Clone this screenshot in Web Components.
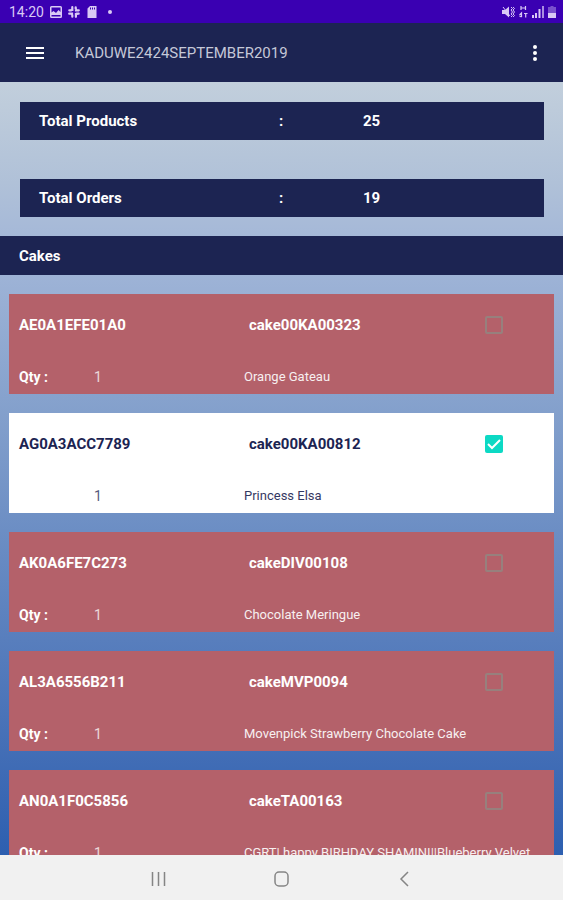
<!DOCTYPE html>
<html lang="en">
<head>
<meta charset="utf-8">
<meta name="viewport" content="width=device-width, initial-scale=1">
<title>Orders</title>
<style>
  html, body {
    height: 100%;
    margin: 0;
  }

  body {
    font-family: Roboto, "Liberation Sans", sans-serif;
    font-size: 14px;
    line-height: 20px;
    --navy: #1c2452;
    --card: #b4616a;
    --accent: #0cd9c4;
  }
</style>
</head>
<body>
<orders-app></orders-app>

<script>
// Attach an open shadow root and fill it with the given markup
const render = (el, html) => {
  const template = document.createElement("template");
  template.innerHTML = html;
  el.attachShadow({ mode: "open" }).appendChild(template.content.cloneNode(true));
}

const CAKES = [
  { id: "AE0A1EFE01A0", code: "cake00KA00323", qty: 1, name: "Orange Gateau" },
  { id: "AG0A3ACC7789", code: "cake00KA00812", qty: 1, name: "Princess Elsa", done: true },
  { id: "AK0A6FE7C273", code: "cakeDIV00108", qty: 1, name: "Chocolate Meringue" },
  { id: "AL3A6556B211", code: "cakeMVP0094", qty: 1, name: "Movenpick Strawberry Chocolate Cake" },
  { id: "AN0A1F0C5856", code: "cakeTA00163", qty: 1, name: "CGRT| happy BIRHDAY SHAMINI||Blueberry Velvet" },
]

class StatusBar extends HTMLElement {
  constructor() {
    super();
    render(this, /*html*/`
      <style>
        :host {
          display: flex;
          align-items: center;
          justify-content: space-between;
          height: 23px;
          padding: 0 7px 0 9px;
          background: #3a00b2;
          color: #d9c9f5;
        }

        .group {
          display: flex;
          align-items: center;
          gap: 6px;
        }

        .signals {
          gap: 4px;
        }

        svg {
          display: block;
          fill: currentColor;
        }
      </style>
      <div class="group">
        <span>14:20</span>
        <svg width="12" height="12" viewBox="0 0 12 12"><path fill-rule="evenodd" d="M1.5 0h9A1.5 1.5 0 0 1 12 1.5v9a1.5 1.5 0 0 1-1.5 1.5h-9A1.5 1.5 0 0 1 0 10.5v-9A1.5 1.5 0 0 1 1.5 0zM1.5 1.5v5l2-1.5 2.5 2 2.5-3 2 2v-4.5zM1.5 9v1.500h9V9z"/></svg>
        <svg width="12" height="12" viewBox="0 0 12 12"><path d="M4.3 1.2V4H3M7.900 10.800V8h1.300M1.200 7.700H4V9M10.800 4.300H8V3M1.300 4.300h2M8.500 7.700h2.200M7.700 1.300v1.500M4.300 9v1.700" fill="none" stroke="currentColor" stroke-width="2.2" stroke-linecap="round"/></svg>
        <svg width="12" height="12" viewBox="0 0 12 12"><path fill-rule="evenodd" d="M4 0h6.500v12h-9V2.500zM4 1.500v2h1v-2zM6 1.500v2h1v-2zM8 1.500v2h1v-2z"/></svg>
        <svg width="12" height="12" viewBox="0 0 12 12"><circle cx="6" cy="6" r="2"/></svg>
      </div>
      <div class="group signals">
        <svg width="13" height="12" viewBox="0 0 13 12"><path d="M0 4h3l4-3.500v11L3 8H0z"/><path d="M1 1l7 9M9 1l1.500 1.500L9 4l1.500 2L9 8l1.500 1.500L9 11M11 1l1.500 1.500L11 4l1.500 2L11 8l1.500 1.500L11 11" fill="none" stroke="currentColor"/></svg>
        <svg width="9" height="12" viewBox="0 0 9 12"><path d="M2 0v4M6.500 0v4M2 2h4.500M2.500 11V7L.5 9M5 7.500h3.500M6.700 7v4.500M2.500 11l-2-1" fill="none" stroke="currentColor" stroke-width="1.2"/></svg>
        <svg width="12" height="12" viewBox="0 0 12 12"><path d="M0 9h2v3H0zM3 7h2v5H3zM6.500 3h2v9h-2z"/><path d="M10 0h2v12h-2z" opacity=".7"/></svg>
        <svg width="8" height="12" viewBox="0 0 8 12"><path d="M2.500 0h3v1H8v11H0V1h2.500z" opacity=".4"/><path d="M0 7h8v5H0z"/></svg>
      </div>`);
  }
}

class AppHeader extends HTMLElement {
  constructor() {
    super();
    render(this, /*html*/`
      <style>
        :host {
          display: flex;
          align-items: center;
          height: 59px;
          padding: 0 16px 0 23px;
          background: var(--navy);
          color: #fff;
        }

        h1 {
          flex: 1;
          margin: 0 0 0 28px;
          color: #c5c8d8;
          font-size: 15px;
          font-weight: 400;
        }

        button {
          width: 24px;
          height: 24px;
          padding: 0;
          border: 0;
          background: none;
          color: inherit;
        }

        svg {
          display: block;
          fill: currentColor;
        }
      </style>
      <button type="button" aria-label="Menu">
        <svg width="24" height="24" viewBox="0 0 24 24"><path d="M3 6h18v2H3zM3 11h18v2H3zM3 16h18v2H3z"/></svg>
      </button>
      <h1><slot></slot></h1>
      <button type="button" aria-label="More options">
        <svg width="24" height="24" viewBox="0 0 24 24"><circle cx="12" cy="6" r="2"/><circle cx="12" cy="12" r="2"/><circle cx="12" cy="18" r="2"/></svg>
      </button>`);
  }
}

class TotalRow extends HTMLElement {
  constructor() {
    super();
    render(this, /*html*/`
      <style>
        :host {
          display: grid;
          grid-template-columns: 40fr 14fr 27fr;
          padding: 9px 19px;
          background: var(--navy);
          color: #fff;
          font-size: 15px;
          font-weight: 700;
        }
      </style>
      <slot></slot><span>:</span><slot name="value"></slot>`);
  }
}

class SectionTitle extends HTMLElement {
  constructor() {
    super();
    render(this, /*html*/`
      <style>
        :host {
          display: block;
          padding: 10px 19px 9px;
          background: var(--navy);
          color: #fff;
        }

        h2 {
          margin: 0;
          font-size: 15px;
          font-weight: 700;
          line-height: 20px;
        }
      </style>
      <h2><slot></slot></h2>`);
  }
}

class OrderCard extends HTMLElement {
  constructor() {
    super();
    render(this, /*html*/`
      <style>
        :host {
          display: block;
          padding: 21px 10px 7px;
          background: var(--card);
          color: #fff;
        }

        :host([done]) {
          background: #fff;
          color: var(--navy);
        }

        .row {
          display: grid;
          grid-template-columns: minmax(0, 3fr) minmax(0, 4fr);
        }

        .row + .row {
          margin-top: 32px;
        }

        .id, .code {
          font-size: 15px;
          font-weight: 700;
        }

        .main {
          display: grid;
          grid-template-columns: 4fr 1fr;
          align-items: center;
          padding-left: 5px;
        }

        .amount {
          display: grid;
          grid-template-columns: 1fr 2fr;
        }

        .amount label {
          font-weight: 700;
        }

        /* Finished orders don't need the quantity label */
        :host([done]) .amount label {
          visibility: hidden;
        }

        .qty {
          opacity: .75;
        }

        .name {
          font-size: 13px;
          opacity: .9;
          white-space: nowrap;
        }

        .check {
          display: grid;
        }

        .check > * {
          grid-area: 1 / 1;
        }

        input {
          appearance: none;
          width: 18px;
          height: 18px;
          margin: 0;
          border: 2px solid #97807d;
          border-radius: 2px;
        }

        input:checked {
          border: 0;
          background: var(--accent);
        }

        svg {
          display: none;
          fill: none;
          stroke: #fff;
          stroke-width: 2;
          pointer-events: none;
        }

        input:checked + svg {
          display: block;
        }
      </style>
      <div class="row">
        <span class="id"></span>
        <div class="main">
          <label class="code" for="done"></label>
          <div class="check">
            <input id="done" type="checkbox">
            <svg width="18" height="18" viewBox="0 0 18 18"><path d="M3 9l4 4 8-8"/></svg>
          </div>
        </div>
      </div>
      <div class="row">
        <div class="amount"><label for="qty">Qty :</label><output id="qty" class="qty"></output></div>
        <span class="name"></span>
      </div>`);
  }

  set order(val) {
    this.toggleAttribute("done", Boolean(val.done));
    this.shadowRoot.querySelector("input").checked = Boolean(val.done);
    for (const key of ["id", "code", "qty", "name"]) {
      this.shadowRoot.querySelector(`.${key}`).textContent = val[key];
    }
  }
}

class NavBar extends HTMLElement {
  constructor() {
    super();
    render(this, /*html*/`
      <style>
        :host {
          display: flex;
          align-items: center;
          justify-content: center;
          gap: 99px;
          height: 45px;
          padding-top: 3px;
          box-sizing: border-box;
          background: #f1f1f1;
        }

        button {
          width: 24px;
          height: 24px;
          padding: 0;
          border: 0;
          background: none;
        }

        svg {
          display: block;
          fill: none;
          stroke: #858585;
          stroke-width: 1.5;
        }
      </style>
      <button type="button" aria-label="Recent apps"><svg width="24" height="24" viewBox="0 0 24 24"><path d="M5.500 5v14M11.500 5v14M17.500 5v14"/></svg></button>
      <button type="button" aria-label="Home"><svg width="24" height="24" viewBox="0 0 24 24"><rect x="5" y="5" width="13" height="14" rx="4"/></svg></button>
      <button type="button" aria-label="Back"><svg width="24" height="24" viewBox="0 0 24 24"><path d="M15 5l-7 7 7 7"/></svg></button>`);
  }
}

class OrdersApp extends HTMLElement {
  constructor() {
    super();
    render(this, /*html*/`
      <style>
        :host {
          display: flex;
          flex-direction: column;
          height: 100vh;
        }

        status-bar, app-header, nav-bar {
          flex: none;
        }

        main {
          flex: 1;
          min-height: 0;
          overflow: hidden;
          background: linear-gradient(#c2cfdc, #b0c1d8 13%, #a2b6d8 22%, #86a2cd 41%, #6c8ec4 58%, #4a73b8 82%, #2d5fb0);
        }

        .totals {
          display: grid;
          gap: 39px;
          padding: 20px 19px 19px 20px;
        }

        .cards {
          display: grid;
          gap: 19px;
          padding: 19px 9px;
        }
      </style>
      <status-bar></status-bar>
      <app-header>KADUWE2424SEPTEMBER2019</app-header>
      <main>
        <div class="totals">
          <total-row>Total Products<span slot="value">25</span></total-row>
          <total-row>Total Orders<span slot="value">19</span></total-row>
        </div>
        <section-title>Cakes</section-title>
        <div class="cards"></div>
      </main>
      <nav-bar></nav-bar>`);
  }

  connectedCallback() {
    const cards = this.shadowRoot.querySelector(".cards");
    for (const order of CAKES) {
      const card = document.createElement("order-card");
      card.order = order;
      cards.appendChild(card);
    }
  }
}

window.customElements.define("status-bar", StatusBar);
window.customElements.define("app-header", AppHeader);
window.customElements.define("total-row", TotalRow);
window.customElements.define("section-title", SectionTitle);
window.customElements.define("order-card", OrderCard);
window.customElements.define("nav-bar", NavBar);
window.customElements.define("orders-app", OrdersApp);
</script>
</body>
</html>
